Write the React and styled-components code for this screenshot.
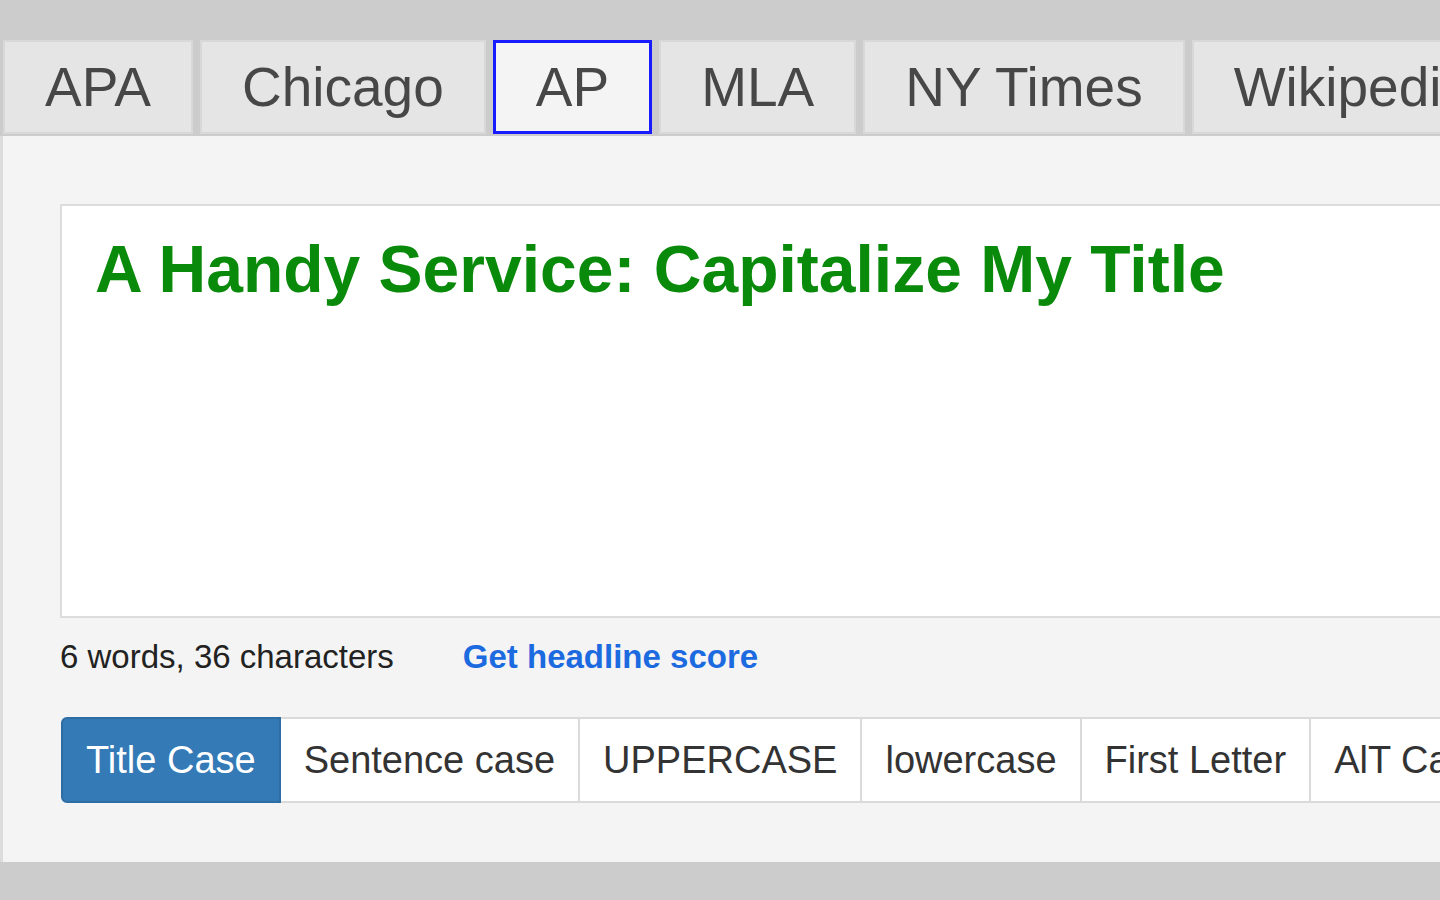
import styled, { createGlobalStyle } from "styled-components";

const Global = createGlobalStyle`
  html, body {
    margin: 0;
    padding: 0;
    background: #cccccc;
    overflow: hidden;
    font-family: "Liberation Sans", Arial, sans-serif;
  }
`;

const Page = styled.div`
  width: 1800px;
  height: 900px;
  padding-top: 40px;
  box-sizing: border-box;
`;

const Tabs = styled.div`
  display: flex;
  padding-left: 3px;
  height: 96px;
  box-sizing: border-box;
`;

const Tab = styled.div`
  display: flex;
  align-items: center;
  height: 94px;
  box-sizing: border-box;
  padding: 0 40px;
  margin-right: 7px;
  font-size: 55px;
  color: #474747;
  background: ${({ active }) => (active ? "#f4f4f4" : "#e5e5e5")};
  border: ${({ active }) => (active ? "3px solid #1a1aff" : "2px solid #d8d8d8")};
  white-space: nowrap;
`;

const Panel = styled.div`
  height: 726px;
  box-sizing: border-box;
  background: #f4f4f4;
  border-left: 3px solid #dcdcdc;
  padding: 68px 0 0 57px;
`;

const Editor = styled.div`
  height: 414px;
  box-sizing: border-box;
  background: #ffffff;
  border: 2px solid #dcdcdc;
  padding: 24px 0 0 33px;
`;

const Headline = styled.div`
  font-size: 66px;
  line-height: 79px;
  font-weight: bold;
  color: #0a8a0a;
`;

const Stats = styled.div`
  display: flex;
  gap: 69px;
  margin-top: 19px;
  font-size: 33px;
  line-height: 40px;
`;

const Count = styled.span`
  color: #222222;
`;

const ScoreLink = styled.a`
  color: #1c6ae0;
  font-weight: bold;
  text-decoration: none;
`;

const CaseGroup = styled.div`
  display: flex;
  margin-top: 40px;
  margin-left: 1px;
`;

const CaseButton = styled.div`
  display: flex;
  align-items: center;
  height: 86px;
  box-sizing: border-box;
  padding: 0 23px;
  margin-left: ${({ first }) => (first ? "0" : "-2px")};
  font-size: 38px;
  white-space: nowrap;
  color: ${({ active }) => (active ? "#ffffff" : "#333333")};
  background: ${({ active }) => (active ? "#337ab7" : "#ffffff")};
  border: 2px solid ${({ active }) => (active ? "#2e6da4" : "#dadada")};
  border-radius: ${({ first }) => (first ? "6px 0 0 6px" : "0")};
  position: relative;
  z-index: ${({ active }) => (active ? 1 : 0)};
`;

const tabs = ["APA", "Chicago", "AP", "MLA", "NY Times", "Wikipedia", "Bluebook"];
const cases = ["Title Case", "Sentence case", "UPPERCASE", "lowercase", "First Letter", "AlT Case"];

export default function App() {
  return (
    <Page>
      <Global />
      <Tabs>
        {tabs.map((t) => (
          <Tab key={t} active={t === "AP"}>
            {t}
          </Tab>
        ))}
      </Tabs>
      <Panel>
        <Editor>
          <Headline>A Handy Service: Capitalize My Title</Headline>
        </Editor>
        <Stats>
          <Count>6 words, 36 characters</Count>
          <ScoreLink href="#">Get headline score</ScoreLink>
        </Stats>
        <CaseGroup>
          {cases.map((c, i) => (
            <CaseButton key={c} first={i === 0} active={i === 0}>
              {c}
            </CaseButton>
          ))}
        </CaseGroup>
      </Panel>
    </Page>
  );
}
